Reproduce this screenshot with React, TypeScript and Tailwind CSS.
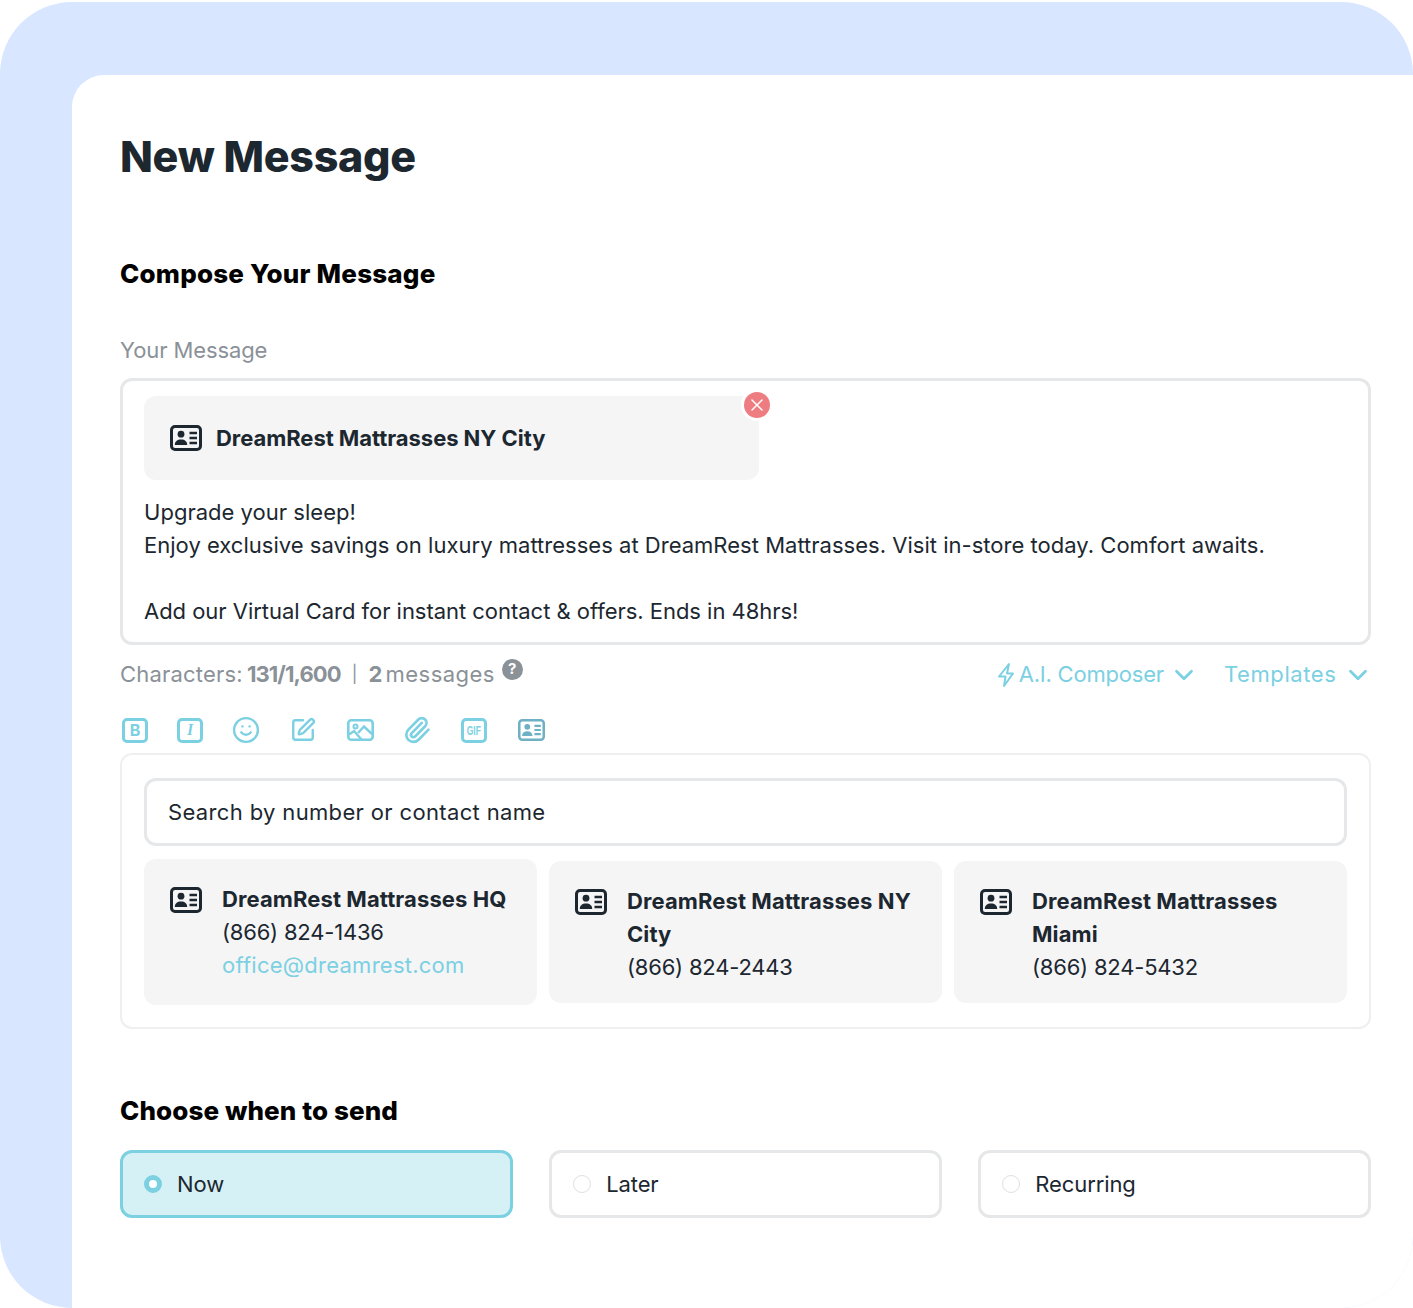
import React from 'react';
import { ChevronDown, Paperclip, Smile, SquarePen, X } from 'lucide-react';

const ContactIcon = ({ className }: { className?: string }) => (
  <svg viewBox="0 0 32 26" fill="none" className={className}>
    <rect x="1.5" y="1.5" width="29" height="23" rx="3.5" stroke="currentColor" strokeWidth="3" />
    <circle cx="11" cy="9.2" r="3.4" fill="currentColor" />
    <path d="M4.8 20c0-3.8 2.4-5.6 6.2-5.6s6.2 1.8 6.2 5.6z" fill="currentColor" />
    <path d="M19.5 8h7.5M19.5 13h7.5M19.5 18h7.5" stroke="currentColor" strokeWidth="2.6" />
  </svg>
);

const ImageIcon = () => (
  <svg viewBox="0 0 27 22" fill="none" className="h-[22px] w-[27px]">
    <rect x="1.3" y="1.3" width="24.4" height="19.4" rx="3" stroke="currentColor" strokeWidth="2.6" />
    <circle cx="8.5" cy="7.5" r="2" stroke="currentColor" strokeWidth="2" />
    <path d="M2 15.5l5-3.5 7.5 8.5M11 14l6-6.5 8 7.5" stroke="currentColor" strokeWidth="2.4" />
  </svg>
);

const BoltIcon = () => (
  <svg viewBox="0 0 18 26" fill="none" className="h-[26px] w-[18px]">
    <path d="M12 2 2 14.5h6.5L7 24l9-12.5H10z" stroke="currentColor" strokeWidth="2" strokeLinejoin="round" />
  </svg>
);

const Toolbar = () => (
  <div className="mt-[25px] ml-[2px] flex h-[28px] items-center gap-[31px] text-[#7bd0e2]">
    <span className="flex h-[25px] w-[26px] items-center justify-center rounded-[5px] border-[3px] border-[#7bd0e2] text-[16px] font-bold leading-none">B</span>
    <span className="-ml-[2px] flex h-[25px] w-[26px] items-center justify-center rounded-[5px] border-[3px] border-[#7bd0e2] font-['Liberation_Serif',serif] text-[16px] font-bold italic leading-none">I</span>
    <Smile className="-ml-[1px] h-[26px] w-[26px] scale-110" strokeWidth={2} />
    <SquarePen className="h-[26px] w-[26px]" strokeWidth={2.2} />
    <ImageIcon />
    <Paperclip className="-ml-[1px] h-[26px] w-[26px] scale-110" strokeWidth={2.2} />
    <span className="flex h-[25px] w-[26px] items-center justify-center rounded-[5px] border-[3px] border-[#7bd0e2] font-['Liberation_Sans',sans-serif] text-[13px] font-bold leading-none">
      <span className="inline-block scale-x-[0.65]">GIF</span>
    </span>
    <ContactIcon className="h-[22px] w-[27px] text-[#6fb0c4]" />
  </div>
);

const ContactCard = ({ name, phone, email, big }: { name: string; phone: string; email?: string; big?: boolean }) => (
  <div className={`flex gap-[20px] rounded-[12px] bg-[#f5f5f6] pl-[26px] pr-[16px] pt-[24px] ${big ? 'h-[146px]' : 'h-[142px]'}`}>
    <ContactIcon className="mt-[4px] h-[26px] w-[32px] shrink-0 text-[#1c2730]" />
    <div className="text-[22px] leading-[33px] tracking-[-0.2px] text-[#1c2730]">
      <div className="font-bold tracking-[0.1px]">{name}</div>
      <div>{phone}</div>
      {email && <div className="tracking-[0.25px] text-[#7bd0e2]">{email}</div>}
    </div>
  </div>
);

const SendOption = ({ label, active }: { label: string; active?: boolean }) => (
  <div className={`flex h-[68px] items-center gap-[15px] rounded-[12px] border-[3px] pl-[21px] ${active ? 'border-[#7bd0e2] bg-[#d5f1f5]' : 'border-[#e6e7e8] bg-white'}`}>
    <span className={`h-[18px] w-[18px] rounded-full bg-white ${active ? 'border-[5px] border-[#7bd0e2]' : 'border-[1.5px] border-[#dedfe0]'}`} />
    <span className="text-[22px] tracking-[-0.1px] text-[#1c2730]">{label}</span>
  </div>
);

export default function App() {
  return (
    <div className="h-[1308px] w-[1413px] pt-[2px]">
      <div className="h-[1306px] overflow-hidden rounded-[72px] bg-[#d9e6ff] pl-[72px] pt-[73px] font-['Inter',sans-serif]">
        <div className="h-full rounded-tl-[32px] bg-white pl-[48px] pr-[42px] pt-[51px]">
          <h1 className="text-[43px] font-extrabold leading-[60px] tracking-[-0.3px] text-[#1c2730]">New Message</h1>

          <h2 className="mt-[69px] text-[26px] font-extrabold leading-[38px] tracking-[0.2px] text-black">Compose Your Message</h2>

          <div className="mt-[41px] text-[22px] leading-[33px] tracking-[-0.1px] text-[#8a9197]">Your Message</div>

          <div className="mt-[11px] h-[267px] rounded-[12px] border-[3px] border-[#e6e7e8] pl-[21px] pt-[15px]">
            <div className="relative flex h-[84px] w-[615px] items-center gap-[14px] rounded-[12px] bg-[#f5f5f6] pl-[26px]">
              <ContactIcon className="h-[26px] w-[32px] text-[#1c2730]" />
              <span className="text-[22px] font-bold tracking-[-0.05px] text-[#1c2730]">DreamRest Mattrasses NY City</span>
              <span className="absolute -right-[11px] -top-[4px] flex h-[26px] w-[26px] items-center justify-center rounded-full bg-[#ee7d82] text-white ring-[3px] ring-white">
                <X className="h-[20px] w-[20px]" strokeWidth={1.8} />
              </span>
            </div>
            <div className="mt-[16px] text-[22px] leading-[33px] tracking-[0.02px] text-[#1c2730]">
              <div>Upgrade your sleep!</div>
              <div>Enjoy exclusive savings on luxury mattresses at DreamRest Mattrasses. Visit in-store today. Comfort awaits.</div>
              <div className="mt-[33px] tracking-[-0.03px]">Add our Virtual Card for instant contact &amp; offers. Ends in 48hrs!</div>
            </div>
          </div>

          <div className="mt-[13px] flex h-[33px] items-center justify-between text-[22px]">
            <div className="flex items-center tracking-[0.2px] text-[#8a9197]">
              <span>Characters:</span>
              <span className="ml-[4px] font-bold tracking-[-0.9px]">131/1,600</span>
              <span className="mx-[11px] text-[17px]">|</span>
              <span className="font-bold">2</span>
              <span className="ml-[3px] tracking-[0.45px]">messages</span>
              <span className="relative -top-[5px] ml-[7px] flex h-[21px] w-[21px] items-center justify-center rounded-full bg-[#8a9197] text-[15px] font-bold tracking-normal text-white">?</span>
            </div>
            <div className="-mr-[1.5px] flex items-center text-[#7bd0e2]">
              <BoltIcon />
              <span className="ml-[4px] tracking-[-0.2px]">A.I. Composer</span>
              <ChevronDown className="ml-[5.5px] h-[30px] w-[30px]" strokeWidth={2.2} />
              <span className="ml-[24.5px] tracking-[0.6px]">Templates</span>
              <ChevronDown className="ml-[6px] h-[30px] w-[30px]" strokeWidth={2.2} />
            </div>
          </div>

          <Toolbar />

          <div className="mt-[9px] h-[276px] rounded-[12px] border-[2px] border-[#eeeff0] px-[22px] pt-[23px]">
            <div className="flex h-[68px] items-center rounded-[12px] border-[3px] border-[#e6e7e8] pl-[21px] text-[22px] tracking-[0.35px] text-[#1c2730]">
              Search by number or contact name
            </div>
            <div className="mt-[13px] grid grid-cols-3 items-center gap-[12px]">
              <ContactCard big name="DreamRest Mattrasses HQ" phone="(866) 824-1436" email="office@dreamrest.com" />
              <ContactCard name="DreamRest Mattrasses NY City" phone="(866) 824-2443" />
              <ContactCard name="DreamRest Mattrasses Miami" phone="(866) 824-5432" />
            </div>
          </div>

          <h2 className="mt-[63px] text-[26px] font-extrabold leading-[38px] tracking-[0.1px] text-black">Choose when to send</h2>

          <div className="mt-[20px] grid grid-cols-3 gap-[36.5px]">
            <SendOption active label="Now" />
            <SendOption label="Later" />
            <SendOption label="Recurring" />
          </div>
        </div>
      </div>
    </div>
  );
}
